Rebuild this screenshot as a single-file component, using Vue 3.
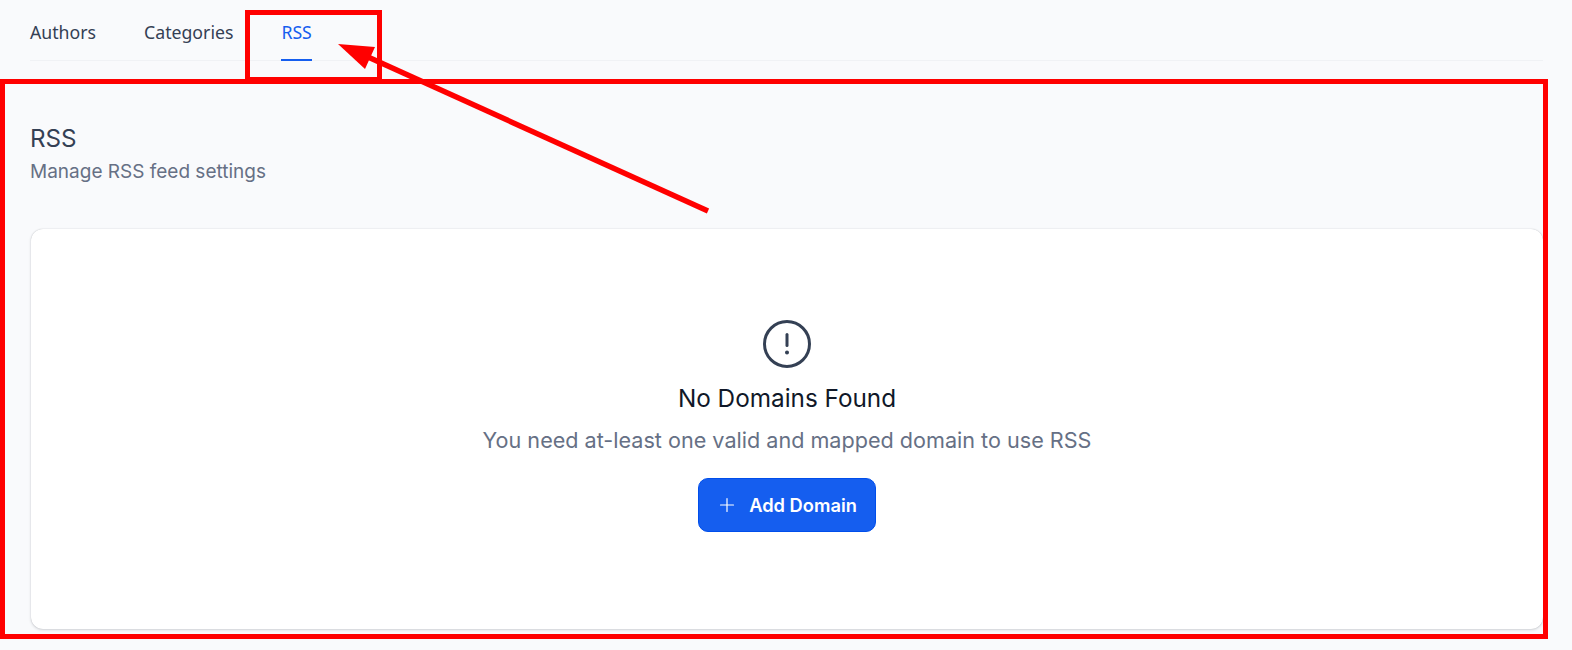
<script setup>
const tabs = [
  { label: 'Authors', active: false },
  { label: 'Categories', active: false },
  { label: 'RSS', active: true },
]
</script>

<template>
  <div class="page">
    <nav class="tabs">
      <a v-for="t in tabs" :key="t.label" class="tab" :class="{ active: t.active }">{{ t.label }}</a>
    </nav>
    <header class="head">
      <h1 class="title">RSS</h1>
      <p class="sub">Manage RSS feed settings</p>
    </header>
    <section class="card">
      <svg class="alert" width="48" height="48" viewBox="0 0 48 48" fill="none" stroke="#344054" stroke-linecap="round">
        <circle cx="24" cy="24" r="22.5" stroke-width="3" />
        <path d="M24 14.5v11" stroke-width="3" />
        <circle cx="24" cy="32.5" r="1.3" fill="#344054" stroke-width="1.4" />
      </svg>
      <h2 class="empty-title">No Domains Found</h2>
      <p class="empty-text">You need at-least one valid and mapped domain to use RSS</p>
      <button class="btn" type="button">
        <svg width="16" height="16" viewBox="0 0 16 16" fill="none" stroke="#fff" stroke-width="1.2" stroke-linecap="round">
          <path d="M8 1.5v13M1.5 8h13" />
        </svg>
        <span>Add Domain</span>
      </button>
    </section>

    <div class="mark mark-tab"></div>
    <div class="mark mark-main"></div>
    <svg class="arrow" width="1572" height="650" viewBox="0 0 1572 650">
      <path d="M708 211 368 57" stroke="#ff0000" stroke-width="5.5" fill="none" />
      <path d="M338 44 375 47 365 69Z" fill="#ff0000" />
    </svg>
  </div>
</template>

<style>
html, body { margin: 0; background: #f9fafc; }
</style>

<style scoped>
.page {
  position: relative;
  width: 1572px;
  height: 650px;
  box-sizing: border-box;
  padding: 0 29px 0 30px;
  overflow: hidden;
  background: #f9fafc;
  font-family: Inter, "Noto Sans", sans-serif;
}
.tabs {
  display: flex;
  gap: 48px;
  height: 60px;
  border-bottom: 1px solid #f0f2f5;
}
.tab {
  position: relative;
  padding-top: 21px;
  font-family: "Noto Sans", sans-serif;
  font-size: 17.7px;
  line-height: 22px;
  color: #344054;
  height: 39px;
}
.tab.active { color: #155eef; }
.tab.active::after {
  content: "";
  position: absolute;
  left: 0;
  right: 0;
  bottom: -1px;
  height: 2px;
  background: #155eef;
}
.head { padding-top: 63px; }
.title {
  margin: 0;
  font-size: 24.2px;
  line-height: 30px;
  font-weight: 400;
  color: #344054;
}
.sub {
  margin: 6px 0 0;
  font-size: 19px;
  line-height: 24px;
  color: #667085;
}
.card {
  box-sizing: border-box;
  margin: 45px 0 0 1px;
  height: 400px;
  padding-top: 91px;
  display: flex;
  flex-direction: column;
  align-items: center;
  background: #fff;
  border-radius: 12px;
  box-shadow: 0 0 1px rgba(16, 24, 40, .25), 0 1px 3px rgba(16, 24, 40, .16);
}
.empty-title {
  margin: 14px 0 0;
  font-size: 24.3px;
  line-height: 32px;
  font-weight: 400;
  color: #101828;
}
.empty-text {
  margin: 12px 0 0;
  font-size: 21.6px;
  line-height: 28px;
  color: #667085;
}
.btn {
  margin-top: 24px;
  width: 178px;
  height: 54px;
  padding: 0 0 0 2px;
  display: flex;
  align-items: center;
  justify-content: center;
  gap: 14px;
  background: #155eef;
  border: 1px solid #004eeb;
  border-radius: 10px;
  color: #fff;
  font: 600 18.3px/24px Inter, "Noto Sans", sans-serif;
}
.mark {
  position: absolute;
  box-sizing: border-box;
  border: 5px solid #ff0000;
  pointer-events: none;
}
.mark-tab { left: 245px; top: 10px; width: 137px; height: 72px; }
.mark-main { left: 0; top: 79px; width: 1548px; height: 560px; }
.arrow { position: absolute; left: 0; top: 0; pointer-events: none; }
</style>
